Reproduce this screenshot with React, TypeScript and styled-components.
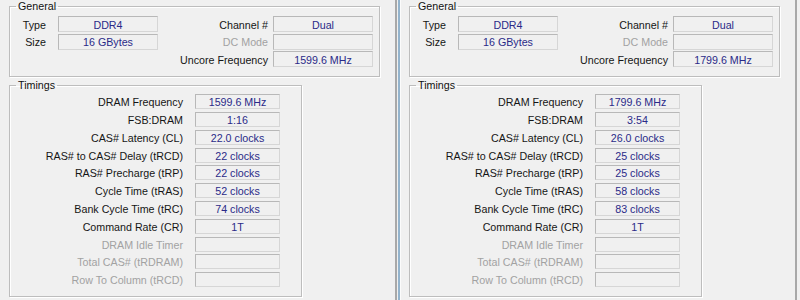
import styled, { createGlobalStyle } from "styled-components";

const GlobalStyle = createGlobalStyle`
  * { box-sizing: border-box; }
  html, body { margin: 0; padding: 0; background: #f0f0f0; }
  body {
    font-family: "Liberation Sans", Arial, sans-serif;
    font-size: 10.7px;
    color: #111;
  }
`;

interface MemoryInfo {
  type: string
  size: string
  channel: string
  uncore: string
  timings: [string, string][]
}

const disabledTimings = ["DRAM Idle Timer", "Total CAS# (tRDRAM)", "Row To Column (tRCD)"];

const windows: MemoryInfo[] = [
  {
    type: "DDR4",
    size: "16 GBytes",
    channel: "Dual",
    uncore: "1599.6 MHz",
    timings: [
      ["DRAM Frequency", "1599.6 MHz"],
      ["FSB:DRAM", "1:16"],
      ["CAS# Latency (CL)", "22.0 clocks"],
      ["RAS# to CAS# Delay (tRCD)", "22 clocks"],
      ["RAS# Precharge (tRP)", "22 clocks"],
      ["Cycle Time (tRAS)", "52 clocks"],
      ["Bank Cycle Time (tRC)", "74 clocks"],
      ["Command Rate (CR)", "1T"],
    ],
  },
  {
    type: "DDR4",
    size: "16 GBytes",
    channel: "Dual",
    uncore: "1799.6 MHz",
    timings: [
      ["DRAM Frequency", "1799.6 MHz"],
      ["FSB:DRAM", "3:54"],
      ["CAS# Latency (CL)", "26.0 clocks"],
      ["RAS# to CAS# Delay (tRCD)", "25 clocks"],
      ["RAS# Precharge (tRP)", "25 clocks"],
      ["Cycle Time (tRAS)", "58 clocks"],
      ["Bank Cycle Time (tRC)", "83 clocks"],
      ["Command Rate (CR)", "1T"],
    ],
  },
];

function MemoryPane({ info, $right }: { info: MemoryInfo, $right?: boolean }) {
  return (
    <Pane $right={$right}>
      <GroupBox $width={371} $pb={9}>
        <Legend>General</Legend>
        <GeneralGrid>
          <Label $gap={12}>Type</Label>
          <Field>{info.type}</Field>
          <Label $gap={5}>Channel #</Label>
          <Field>{info.channel}</Field>

          <Label $gap={12}>Size</Label>
          <Field>{info.size}</Field>
          <Label $gap={5} $disabled>DC Mode</Label>
          <Field />

          <span />
          <span />
          <Label $gap={5}>Uncore Frequency</Label>
          <Field>{info.uncore}</Field>
        </GeneralGrid>
      </GroupBox>

      <GroupBox $width={293} $pb={9} $mt={2}>
        <Legend>Timings</Legend>
        <TimingsGrid>
          {info.timings.map(([k, v]) => (
            <Row key={k}>
              <Label $gap={12}>{k}</Label>
              <Field>{v}</Field>
            </Row>
          ))}
          {disabledTimings.map((k) => (
            <Row key={k}>
              <Label $gap={12} $disabled>{k}</Label>
              <Field />
            </Row>
          ))}
        </TimingsGrid>
      </GroupBox>
    </Pane>
  )
}

export default function App() {
  return (
    <>
      <GlobalStyle />
      <Page>
        <MemoryPane info={windows[0]} />
        <MemoryPane info={windows[1]} $right />
      </Page>
    </>
  )
}

const Page = styled.div`
  display: flex;
  width: 800px;
  height: 300px;
  overflow: hidden;
  background: #f0f0f0;
`

const Pane = styled.div<{ $right?: boolean }>`
  flex: none;
  display: flex;
  flex-direction: column;
  height: 300px;
  padding-left: 9px;
  border-right: 2px solid #a8a8a8;
  width: ${p => p.$right ? 399 : 397}px;
  ${p => p.$right && `
    margin-left: 1px;
    border-left: 2px solid #93b3cc;
    box-shadow: inset 1px 0 0 #fbfbfb;
  `}
`

const GroupBox = styled.fieldset<{ $width: number, $pb: number, $mt?: number }>`
  width: ${p => p.$width}px;
  margin: ${p => p.$mt || 0}px 0 0 0;
  padding: 0 0 ${p => p.$pb}px 0;
  min-width: 0;
  border: 1px solid #bdbdbd;
  box-shadow: inset 1px 1px 0 #fff, 1px 1px 0 #fff;
`

const Legend = styled.legend`
  margin-left: 6px;
  padding: 0 2px;
  line-height: 13px;
  color: #111;
`

const GeneralGrid = styled.div`
  display: grid;
  grid-template-columns: 48px 100px 115px 100px;
  grid-auto-rows: 16px;
  row-gap: 1.7px;
  padding-top: 3px;
`

const TimingsGrid = styled.div`
  display: grid;
  grid-auto-rows: 15px;
  row-gap: 2.78px;
  padding-top: 2px;
`

const Row = styled.div`
  display: grid;
  grid-template-columns: 185px 85px;
`

const Label = styled.span<{ $gap: number, $disabled?: boolean }>`
  align-self: center;
  text-align: right;
  white-space: nowrap;
  padding-right: ${p => p.$gap}px;
  padding-top: 2px;
  line-height: 13px;
  color: ${p => p.$disabled ? "#a2a2a2" : "#151515"};
`

const Field = styled.div`
  display: flex;
  align-items: center;
  justify-content: center;
  padding-top: 1px;
  white-space: nowrap;
  color: #2a2a88;
  background: #f0f0f0;
  border: 1px solid #b8b8b8;
  border-right-color: #d6d6d6;
  border-bottom-color: #d6d6d6;
`
